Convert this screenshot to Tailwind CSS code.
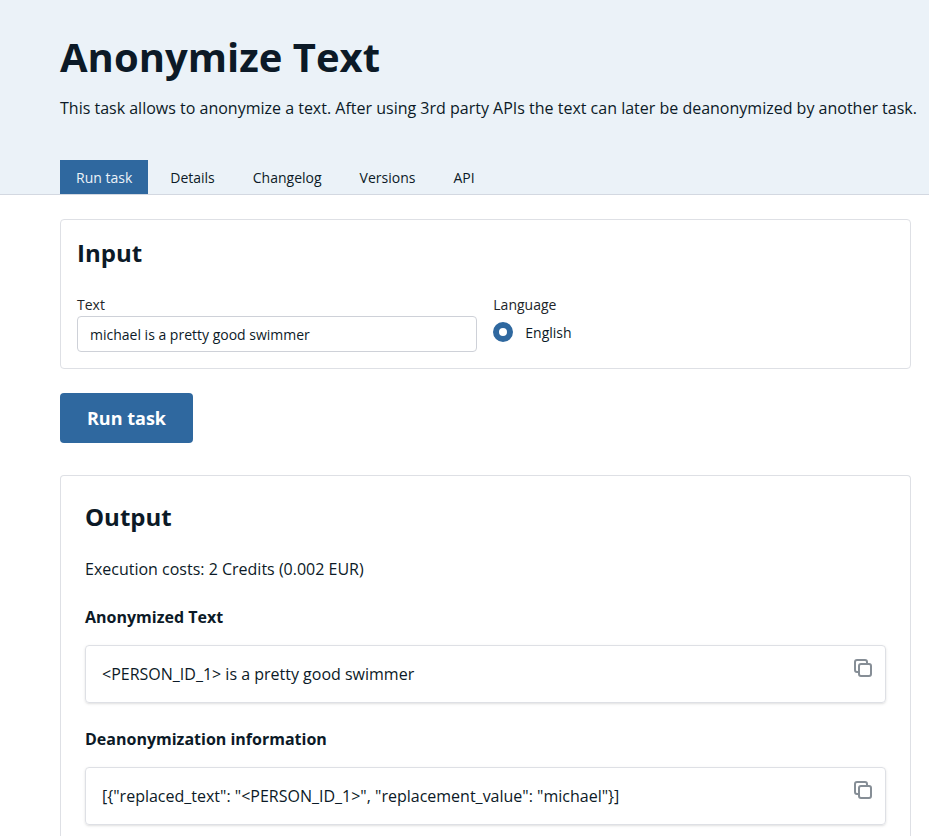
<!DOCTYPE html>
<html lang="en">
<head>
<meta charset="utf-8">
<title>Anonymize Text</title>
<script src="https://cdn.jsdelivr.net/npm/@tailwindcss/browser@4"></script>
</head>
<body class="h-[836px] overflow-hidden bg-white font-['Open_Sans','Noto_Sans',sans-serif] text-base text-[#0c1a27]">
<header class="h-[195px] border-b border-[#d3d8e1] bg-[#ebf2f8] pl-[60px] flex flex-col">
  <h1 class="mt-[29px] text-[40px] leading-[56px] font-bold whitespace-nowrap">Anonymize Text</h1>
  <p class="mt-[11px] leading-6 whitespace-nowrap">This task allows to anonymize a text. After using 3rd party APIs the text can later be deanonymized by another task.</p>
  <nav class="mt-auto flex h-[34px] gap-[6px] text-sm leading-[35px]">
    <a class="bg-[#2f689f] px-4 text-[#ebf2f8]">Run task</a>
    <a class="px-4">Details</a>
    <a class="px-4">Changelog</a>
    <a class="px-4">Versions</a>
    <a class="px-4">API</a>
  </nav>
</header>
<main class="pl-[60px] pr-[18px] pt-6">
  <section class="h-[150px] rounded border border-[#dee0e5] px-4 pt-[17px]">
    <h2 class="text-2xl leading-8 font-bold">Input</h2>
    <div class="mt-[25px] flex gap-4 text-sm">
      <div class="w-[400px]">
        <div class="leading-[21px] text-[#212529]">Text</div>
        <div class="mt-px h-9 rounded border border-[#ced1d8] px-3 leading-[35px]">michael is a pretty good swimmer</div>
      </div>
      <div class="pl-[0.3px]">
        <div class="leading-[21px] text-[#212529]">Language</div>
        <div class="flex items-start gap-3 pt-[7px]"><span class="size-5 rounded-full border-[6px] border-[#2f689f] bg-white"></span><span class="leading-[22px]">English</span></div>
      </div>
    </div>
  </section>
  <button class="mt-6 block h-[50px] w-[133px] rounded bg-[#2f689f] text-lg font-bold text-white">Run task</button>
  <section class="mt-8 h-[361px] rounded-t border border-b-0 border-[#dee0e5] px-6 pt-[25px]">
    <h2 class="text-2xl leading-8 font-bold">Output</h2>
    <p class="mt-6 leading-6">Execution costs: 2 Credits (0.002 EUR)</p>
    <h3 class="mt-6 leading-6 font-bold">Anonymized Text</h3>
    <div class="mt-4 flex h-[58px] justify-between rounded border border-[#dee0e5] pl-4 pr-3 shadow-sm">
      <span class="leading-[56px]">&lt;PERSON_ID_1&gt; is a pretty good swimmer</span>
      <svg class="mt-3 size-5" viewBox="0 0 20 20" fill="none" stroke="#868e96" stroke-width="2" stroke-linejoin="round" stroke-linecap="round"><rect x="6" y="6" width="12" height="12" rx="2"/><path d="M14 6V4a2 2 0 0 0-2-2H4a2 2 0 0 0-2 2v8a2 2 0 0 0 2 2h2"/></svg>
    </div>
    <h3 class="mt-6 leading-6 font-bold">Deanonymization information</h3>
    <div class="mt-4 flex h-[58px] justify-between rounded border border-[#dee0e5] pl-4 pr-3 shadow-sm">
      <span class="leading-[56px]">[{"replaced_text": "&lt;PERSON_ID_1&gt;", "replacement_value": "michael"}]</span>
      <svg class="mt-3 size-5" viewBox="0 0 20 20" fill="none" stroke="#868e96" stroke-width="2" stroke-linejoin="round" stroke-linecap="round"><rect x="6" y="6" width="12" height="12" rx="2"/><path d="M14 6V4a2 2 0 0 0-2-2H4a2 2 0 0 0-2 2v8a2 2 0 0 0 2 2h2"/></svg>
    </div>
  </section>
</main>
</body>
</html>
